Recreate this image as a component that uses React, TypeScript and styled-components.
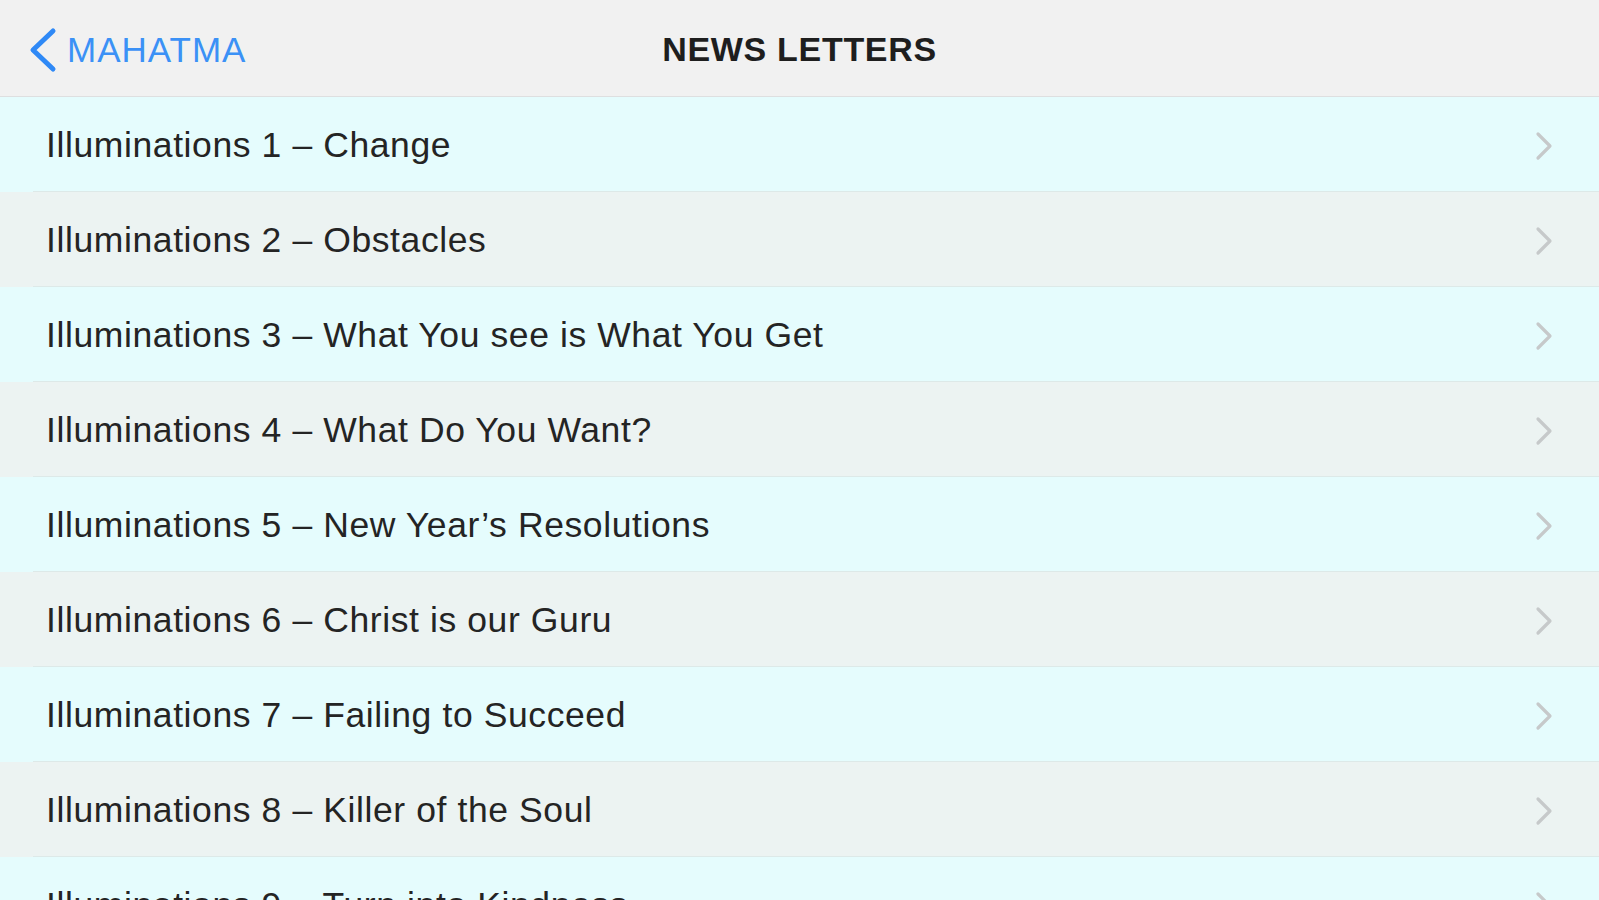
import React from 'react';
import styled, { createGlobalStyle } from 'styled-components';

const items = [
  'Illuminations 1 – Change',
  'Illuminations 2 – Obstacles',
  'Illuminations 3 – What You see is What You Get',
  'Illuminations 4 – What Do You Want?',
  'Illuminations 5 – New Year’s Resolutions',
  'Illuminations 6 – Christ is our Guru',
  'Illuminations 7 – Failing to Succeed',
  'Illuminations 8 – Killer of the Soul',
  'Illuminations 9 – Turn into Kindness',
];

const GlobalStyle = createGlobalStyle`
  html, body {
    margin: 0;
    padding: 0;
    height: 100%;
    overflow: hidden;
    background: #e5fcfd;
    font-family: "Liberation Sans", Arial, sans-serif;
  }
`;

const Page = styled.div`
  display: flex;
  flex-direction: column;
  height: 900px;
  overflow: hidden;
`;

const NavBar = styled.header`
  display: grid;
  grid-template-columns: 1fr auto 1fr;
  align-items: center;
  height: 97px;
  padding-top: 3px;
  box-sizing: border-box;
  background: #f1f1f1;
  border-bottom: 1px solid #dedfe0;
  flex-shrink: 0;
`;

const BackButton = styled.button`
  display: flex;
  align-items: center;
  gap: 9px;
  justify-self: start;
  padding: 0 0 0 28px;
  margin: 0;
  background: none;
  border: none;
  color: #3b91f6;
  font-family: "Liberation Sans", Arial, sans-serif;
  font-size: 35px;
  letter-spacing: 1px;
  cursor: pointer;
`;

const Title = styled.h1`
  margin: 0;
  font-size: 34px;
  font-weight: 700;
  color: #1e1e1e;
  letter-spacing: 0.7px;
`;

const List = styled.ul`
  list-style: none;
  margin: 0;
  padding: 0;
`;

const Row = styled.li<{ $alt: boolean }>`
  display: flex;
  align-items: center;
  justify-content: space-between;
  height: 95px;
  padding: 2px 46px 0 46px;
  box-sizing: border-box;
  background:
    linear-gradient(to right, transparent 33px, #dde9e8 33px) bottom / 100% 1px no-repeat,
    ${({ $alt }) => ($alt ? '#ecf3f2' : '#e5fcfd')};
  color: #242424;
  font-size: 35.5px;
  cursor: pointer;
`;

const Label = styled.span`
  white-space: nowrap;
  letter-spacing: 0.6px;
`;

const Chevron = () => (
  <svg width="18" height="30" viewBox="0 0 18 30" fill="none">
    <path d="M3 3l12 12-12 12" stroke="#c6c9ca" strokeWidth="3.2" strokeLinecap="round" strokeLinejoin="round" />
  </svg>
);

const BackChevron = () => (
  <svg width="30" height="46" viewBox="0 0 30 46" fill="none">
    <path d="M25 4L5 23l20 19" stroke="#2f89f6" strokeWidth="5" strokeLinecap="round" strokeLinejoin="round" />
  </svg>
);

export default function App() {
  return (
    <Page>
      <GlobalStyle />
      <NavBar>
        <BackButton>
          <BackChevron />
          MAHATMA
        </BackButton>
        <Title>NEWS LETTERS</Title>
        <span />
      </NavBar>
      <List>
        {items.map((item, i) => (
          <Row key={item} $alt={i % 2 === 1}>
            <Label>{item}</Label>
            <Chevron />
          </Row>
        ))}
      </List>
    </Page>
  );
}
